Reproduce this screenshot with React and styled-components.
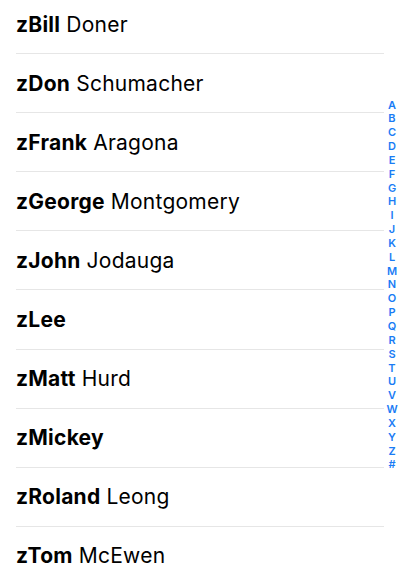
import React from 'react';
import styled, { createGlobalStyle } from 'styled-components';

const GlobalStyle = createGlobalStyle`
  html, body {
    margin: 0;
    padding: 0;
    background: #ffffff;
  }
  body {
    font-family: Inter, "Liberation Sans", Arial, sans-serif;
    overflow: hidden;
  }
`;

const Screen = styled.div`
  position: relative;
  width: 400px;
  height: 577px;
  overflow: hidden;
  background: #ffffff;
`;

const List = styled.ul`
  list-style: none;
  margin: -5px 0 0;
  padding: 0;
`;

const Row = styled.li`
  display: flex;
  align-items: center;
  height: 58.1px;
  margin: 0 16px;
  border-bottom: 1px solid #e6e6e6;
  font-size: 21px;
  letter-spacing: 0.25px;
  color: #000000;
`;

const First = styled.span`
  font-weight: 700;
`;

const Last = styled.span`
  font-weight: 400;
  margin-left: 6px;
`;

const Index = styled.ol`
  position: absolute;
  right: 0;
  top: 50%;
  transform: translateY(calc(-50% - 3px));
  width: 16px;
  margin: 0;
  padding: 0;
  list-style: none;
  display: flex;
  flex-direction: column;
  align-items: center;
`;

const IndexLetter = styled.li`
  height: 13.85px;
  line-height: 13.85px;
  font-size: 11px;
  font-weight: 600;
  color: #1a7cf5;
  text-align: center;
`;

const contacts = [
  ['zBill', 'Doner'],
  ['zDon', 'Schumacher'],
  ['zFrank', 'Aragona'],
  ['zGeorge', 'Montgomery'],
  ['zJohn', 'Jodauga'],
  ['zLee', ''],
  ['zMatt', 'Hurd'],
  ['zMickey', ''],
  ['zRoland', 'Leong'],
  ['zTom', 'McEwen'],
];

const letters = 'ABCDEFGHIJKLMNOPQRSTUVWXYZ#'.split('');

export default function App() {
  return (
    <Screen>
      <GlobalStyle />
      <List>
        {contacts.map(([first, last]) => (
          <Row key={first}>
            <First>{first}</First>
            {last && <Last>{last}</Last>}
          </Row>
        ))}
      </List>
      <Index>
        {letters.map((l) => (
          <IndexLetter key={l}>{l}</IndexLetter>
        ))}
      </Index>
    </Screen>
  );
}
